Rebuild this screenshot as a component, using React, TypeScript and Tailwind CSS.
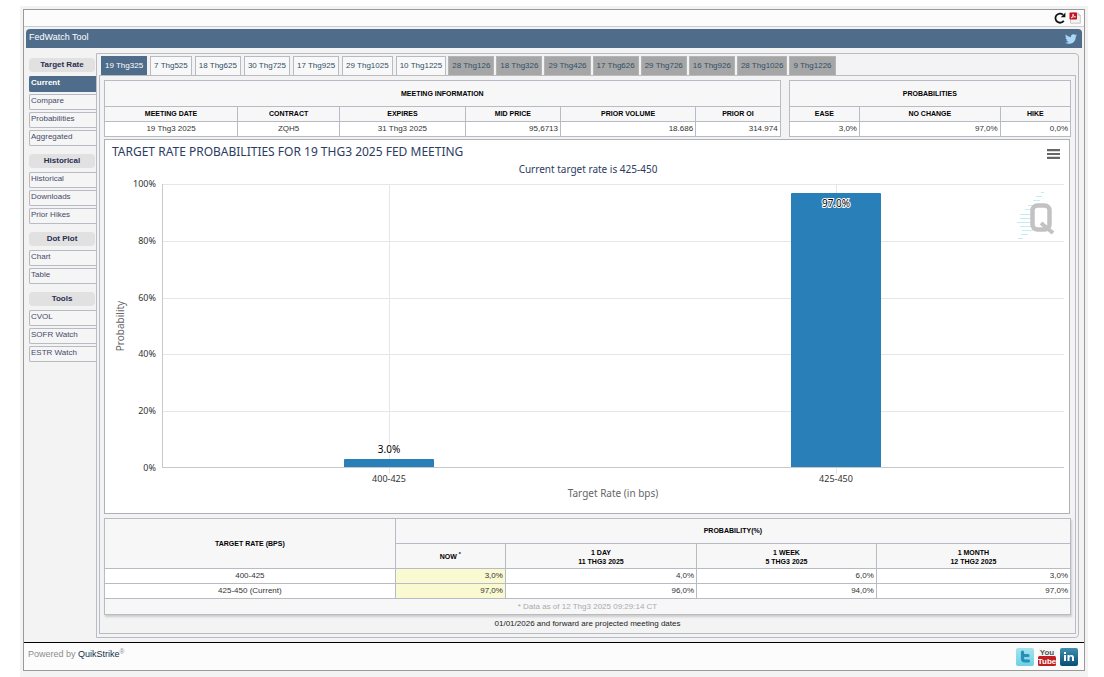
import { FaTwitter } from 'react-icons/fa';
import clsx from 'clsx';

const NAV = [
  { title: 'Target Rate', items: ['Current', 'Compare', 'Probabilities', 'Aggregated'] },
  { title: 'Historical', items: ['Historical', 'Downloads', 'Prior Hikes'] },
  { title: 'Dot Plot', items: ['Chart', 'Table'] },
  { title: 'Tools', items: ['CVOL', 'SOFR Watch', 'ESTR Watch'] },
];

const MEETINGS = ['19 Thg325', '7 Thg525', '18 Thg625', '30 Thg725', '17 Thg925', '29 Thg1025', '10 Thg1225'];
const PROJECTED = ['28 Thg126', '18 Thg326', '29 Thg426', '17 Thg626', '29 Thg726', '16 Thg926', '28 Thg1026', '9 Thg1226'];

const BARS = [
  { label: '400-425', value: 3, center: 284 },
  { label: '425-450', value: 97, center: 731 },
];

const PLOT = { left: 57, right: 959, top: 44, bottom: 328 };
const yFor = (value: number) => Math.round(PLOT.bottom - ((PLOT.bottom - PLOT.top) * value) / 100);

const th = 'border border-[#b9bbc4] bg-[#f7f7f8] px-0 pt-px pb-0 text-center text-[7px] font-bold text-black uppercase';
const td = 'border border-[#b9bbc4] bg-white px-[2px] py-0 text-[8px] text-[#333]';

function Toolbar() {
  return (
    <div className="flex h-[17px] items-center justify-end gap-[3px] border-b border-[#ccc] bg-[#fcfcfc] pr-[3px]">
      <button type="button" aria-label="Reload">
        <svg className="h-3 w-3" viewBox="0 0 12 12">
          <path d="M9.8 8.8A4.6 4.6 0 1 1 9 2.6" fill="none" stroke="#111" strokeWidth="1.8" />
          <path d="M11.4 0.6V5.2H6.8Z" fill="#111" />
        </svg>
      </button>
      <button type="button" aria-label="Export to PDF">
        <svg className="h-3 w-3" viewBox="0 0 12 12">
          <path d="M3.5 1H9L11.3 3.3V11.2H1.5V3Z" fill="#f4f4f4" stroke="#bbb" strokeWidth="0.8" />
          <path d="M9 1V3.3H11.3" fill="#ddd" stroke="#bbb" strokeWidth="0.6" />
          <rect x="0.5" y="0.5" width="7.5" height="7" rx="0.8" fill="#c8101c" />
          <path d="M2.2 6C3.6 4.8 4.2 3 4 2C4 3.6 5.2 4.8 6.6 4.9C5 4.6 3.4 5 2.2 6Z" fill="none" stroke="#fff" strokeWidth="0.8" />
        </svg>
      </button>
    </div>
  );
}

function Sidebar() {
  return (
    <nav className="flex w-[67px] shrink-0 flex-col gap-2 pt-[5px]">
      {NAV.map((group) => (
        <div key={group.title}>
          <h3 className="mr-px mb-1 h-[14px] rounded-sm bg-[#e1e1e1] text-center text-[8px] leading-[13px] font-bold text-[#2a2e50]">
            {group.title}
          </h3>
          <ul className="flex flex-col gap-[2px]">
            {group.items.map((item) => (
              <li key={item}>
                <a
                  href="#"
                  className={clsx(
                    'block h-4 rounded-l-xs border border-r-0 pl-px text-[8px] leading-3',
                    item === 'Current'
                      ? 'border-[#4f6c8a] bg-[#4f6c8a] font-bold text-white'
                      : 'border-[#b9bbc4] bg-[#f5f5f5] text-[#464a68]'
                  )}
                >
                  {item}
                </a>
              </li>
            ))}
          </ul>
        </div>
      ))}
    </nav>
  );
}

function Tabs() {
  return (
    <div className="flex gap-[2px] pl-[2px] text-[8px]">
      <div className="flex gap-[3px]">
        {MEETINGS.map((name, i) => (
          <button
            key={name}
            type="button"
            className={clsx(
              'h-[19px] border border-b-0 px-[3px] whitespace-nowrap',
              i === 0 ? 'border-[#4f6c8a] bg-[#4f6c8a] text-white' : 'border-[#b9bbc4] bg-[#f8f8f8] text-[#2f5068]'
            )}
          >
            {name}
          </button>
        ))}
      </div>
      <div className="flex gap-[2px]">
        {PROJECTED.map((name) => (
          <button
            key={name}
            type="button"
            className="h-[19px] border border-b-0 border-[#b4b4b4] bg-[#a6a6a6] px-[3px] whitespace-nowrap text-[#2f5068]"
          >
            {name}
          </button>
        ))}
      </div>
    </div>
  );
}

function MeetingTables() {
  return (
    <div className="flex gap-2">
      <table className="w-[69%] grow table-fixed border-collapse">
        <colgroup>
          <col className="w-[19.7%]" />
          <col className="w-[15.1%]" />
          <col className="w-[18.6%]" />
          <col className="w-[14.1%]" />
          <col className="w-[20%]" />
          <col className="w-[12.5%]" />
        </colgroup>
        <thead>
          <tr className="h-[26px]">
            <th className={th} colSpan={6}>Meeting Information</th>
          </tr>
          <tr className="h-[15px]">
            <th className={th}>Meeting Date</th>
            <th className={th}>Contract</th>
            <th className={th}>Expires</th>
            <th className={th}>Mid Price</th>
            <th className={th}>Prior Volume</th>
            <th className={th}>Prior OI</th>
          </tr>
        </thead>
        <tbody>
          <tr className="h-[15px] leading-3">
            <td className={clsx(td, 'text-center')}>19 Thg3 2025</td>
            <td className={clsx(td, 'text-center')}>ZQH5</td>
            <td className={clsx(td, 'text-center')}>31 Thg3 2025</td>
            <td className={clsx(td, 'text-right')}>95,6713</td>
            <td className={clsx(td, 'text-right')}>18.686</td>
            <td className={clsx(td, 'text-right')}>314.974</td>
          </tr>
        </tbody>
      </table>
      <table className="w-[29.2%] table-fixed border-collapse">
        <colgroup>
          <col className="w-[25%]" />
          <col className="w-[50%]" />
          <col className="w-[25%]" />
        </colgroup>
        <thead>
          <tr className="h-[26px]">
            <th className={th} colSpan={3}>Probabilities</th>
          </tr>
          <tr className="h-[15px]">
            <th className={th}>Ease</th>
            <th className={th}>No Change</th>
            <th className={th}>Hike</th>
          </tr>
        </thead>
        <tbody>
          <tr className="h-[15px] leading-3">
            <td className={clsx(td, 'text-right')}>3,0%</td>
            <td className={clsx(td, 'text-right')}>97,0%</td>
            <td className={clsx(td, 'text-right')}>0,0%</td>
          </tr>
        </tbody>
      </table>
    </div>
  );
}

function Chart() {
  return (
    <div className="relative mt-[2px] mr-px border border-[#b0b1b8] bg-white">
      <svg className="block h-auto w-full font-['Noto_Sans',sans-serif]" viewBox="0 0 964 373">
        <text x="7" y="16" fontSize="12" fill="#2c3c62">
          TARGET RATE PROBABILITIES FOR 19 THG3 2025 FED MEETING
        </text>
        <text x="483" y="33" fontSize="10" textAnchor="middle" fill="#2c3c62">
          Current target rate is 425-450
        </text>

        {/* grid and axes */}
        <g shapeRendering="crispEdges">
          {[20, 40, 60, 80, 100].map((tick) => (
            <line key={tick} x1={PLOT.left} x2={PLOT.right} y1={yFor(tick) + 0.5} y2={yFor(tick) + 0.5} stroke="#e6e6e6" />
          ))}
          {BARS.map((bar) => (
            <line key={bar.label} x1={bar.center + 0.5} x2={bar.center + 0.5} y1={PLOT.top} y2={PLOT.bottom + 6} stroke="#e6e6e6" />
          ))}
          <line x1={PLOT.left + 0.5} x2={PLOT.left + 0.5} y1={PLOT.top} y2={PLOT.bottom} stroke="#c8c8cc" />
        </g>
        {[0, 20, 40, 60, 80, 100].map((tick) => (
          <text key={tick} x="51" y={yFor(tick) + 3} fontSize="9" textAnchor="end" fill="#333">
            {tick}%
          </text>
        ))}

        {/* Q watermark */}
        <path
          d="M936 52.5h3M931 56.5h6M928 60.5h7M923 65.5h9M920 69.5h8M915 74.5h12M915 78.5h12M912 82.5h15M915 86.5h12M917 90.5h11M916 94.5h7M913 98.5h5"
          stroke="#c4ecf2"
        />
        <rect x="927.5" y="65.5" width="17" height="24" rx="5" fill="none" stroke="#c2c2c2" strokeWidth="4.5" />
        <path d="M936 83L948 93" fill="none" stroke="#c2c2c2" strokeWidth="4" />

        {BARS.map((bar) => (
          <g key={bar.label}>
            <rect x={bar.center - 45} y={yFor(bar.value)} width="90" height={PLOT.bottom - yFor(bar.value)} rx="1" fill="#2980b9" />
            <text x={bar.center} y={342} fontSize="9" textAnchor="middle" fill="#333">
              {bar.label}
            </text>
            <text
              x={bar.center}
              y={bar.value > 90 ? yFor(bar.value) + 14 : yFor(bar.value) - 6}
              fontSize="10"
              textAnchor="middle"
              fill="#000"
              stroke="#fff"
              strokeWidth="2"
              paintOrder="stroke"
            >
              {bar.value.toFixed(1)}%
            </text>
          </g>
        ))}
        <line x1={PLOT.left} x2={PLOT.right} y1={PLOT.bottom - 0.5} y2={PLOT.bottom - 0.5} stroke="#c8c8cc" />
        <text x="508" y="357" fontSize="10" textAnchor="middle" fill="#666">
          Target Rate (in bps)
        </text>
        <text transform="translate(19 186) rotate(-90)" fontSize="10" textAnchor="middle" fill="#666">
          Probability
        </text>
      </svg>
      <button type="button" aria-label="Chart menu" className="absolute top-2 right-[9px]">
        <svg className="block h-[12px] w-[13px]" viewBox="0 0 13 12">
          <path d="M0 2.2H13M0 6H13M0 9.8H13" stroke="#666" strokeWidth="2.2" />
        </svg>
      </button>
    </div>
  );
}

function ProbabilityTable() {
  const rows = [
    ['400-425', '3,0%', '4,0%', '6,0%', '3,0%'],
    ['425-450 (Current)', '97,0%', '96,0%', '94,0%', '97,0%'],
  ];
  return (
    <table className="mt-1 w-full table-fixed border-collapse shadow-[1px_2px_2px_#ccc]">
      <colgroup>
        <col className="w-[30.1%]" />
        <col className="w-[11.4%]" />
        <col className="w-[19.8%]" />
        <col className="w-[18.6%]" />
        <col className="w-[20.1%]" />
      </colgroup>
      <thead>
        <tr className="h-[25px]">
          <th className={th} rowSpan={2}>Target Rate (bps)</th>
          <th className={th} colSpan={4}>Probability(%)</th>
        </tr>
        <tr className="h-[25px] leading-[9px]">
          <th className={th}>Now <sup>*</sup></th>
          <th className={th}>1 Day<br />11 Thg3 2025</th>
          <th className={th}>1 Week<br />5 Thg3 2025</th>
          <th className={th}>1 Month<br />12 Thg2 2025</th>
        </tr>
      </thead>
      <tbody>
        {rows.map(([rate, now, day, week, month]) => (
          <tr key={rate} className="h-[15px] leading-3">
            <td className={clsx(td, 'text-center')}>{rate}</td>
            <td className="border border-[#b9bbc4] bg-[#f9f9d2] px-[2px] py-0 text-right text-[8px] text-[#333]">{now}</td>
            <td className={clsx(td, 'text-right')}>{day}</td>
            <td className={clsx(td, 'text-right')}>{week}</td>
            <td className={clsx(td, 'text-right')}>{month}</td>
          </tr>
        ))}
        <tr className="h-4 leading-3">
          <td colSpan={5} className="border border-[#b9bbc4] bg-[#f7f7f8] p-0 text-center text-[8px] text-[#aaa]">
            * Data as of 12 Thg3 2025 09:29:14 CT
          </td>
        </tr>
      </tbody>
    </table>
  );
}

function Footer() {
  return (
    <footer className="flex h-[28px] justify-between border-t border-black bg-[#fcfcfc] pr-[6px] pl-1">
      <p className="pt-1 text-[9px] leading-[14px] text-[#8c8c8c]">
        Powered by <a href="#" className="text-[#12304a]">QuikStrike</a><sup>®</sup>
      </p>
      <div className="flex items-center gap-1">
        <a href="#" aria-label="Twitter">
          <svg className="h-[18px] w-[18px]" viewBox="0 0 18 18">
            <defs>
              <linearGradient id="tw" x2="0" y2="1">
                <stop stopColor="#a5e4ef" />
                <stop offset="1" stopColor="#6fd0e2" />
              </linearGradient>
            </defs>
            <rect width="18" height="18" rx="2" fill="url(#tw)" />
            <path d="M6.5 4V10.5Q6.5 13 9 13H12.5M6.5 7.5H12" fill="none" stroke="#2690b8" strokeWidth="3.2" strokeLinecap="round" />
          </svg>
        </a>
        <a href="#" aria-label="YouTube">
          <svg className="h-[18px] w-[18px] font-['Liberation_Sans_Narrow','Liberation_Sans',sans-serif] font-bold" viewBox="0 0 18 18">
            <rect width="18" height="18" rx="1" fill="#f7f7f7" />
            <rect y="8" width="18" height="10" rx="1.5" fill="#c01f24" />
            <text x="9" y="7" fontSize="8" textAnchor="middle" fill="#555">You</text>
            <text x="9" y="16" fontSize="8" textAnchor="middle" fill="#fff">Tube</text>
          </svg>
        </a>
        <a href="#" aria-label="LinkedIn">
          <svg className="h-[18px] w-[18px]" viewBox="0 0 18 18">
            <defs>
              <linearGradient id="li" x2="0" y2="1">
                <stop stopColor="#3f8fb0" />
                <stop offset="1" stopColor="#094d75" />
              </linearGradient>
            </defs>
            <rect width="18" height="18" rx="2" fill="url(#li)" />
            <path d="M4 7h2v6H4ZM4 4h2v2H4ZM7.5 7h2v0.9C10.3 6.7 14 6.2 14 9.6V13H12V9.9C12 8.1 9.5 8.2 9.5 9.9V13h-2Z" fill="#fff" />
          </svg>
        </a>
      </div>
    </footer>
  );
}

export default function App() {
  return (
    <div className="mt-[6px] mr-4 ml-5 bg-[#f3f3f3] p-[3px] pb-[6px] font-['Liberation_Sans',Arial,sans-serif]">
      <div className="border border-[#999]">
        <Toolbar />
        <header className="mx-[2px] mt-[2px] flex h-[19px] items-center justify-between rounded-t-sm bg-[#4f6c8a] pr-[5px] pl-[3px]">
          <h1 className="pb-[3px] text-[9px] leading-3 text-white">FedWatch Tool</h1>
          <a href="#" aria-label="Share on Twitter">
            <FaTwitter className="h-3 w-3 text-[#a9d8f8]" />
          </a>
        </header>
        <div className="mt-[5px] mr-[5px] mb-1 ml-[5px] flex">
          <Sidebar />
          <main className="min-w-0 grow rounded-tr-sm rounded-br-sm border border-[#b9bbc4] p-[2px] pb-[3px]">
            <Tabs />
            <div className="border border-[#b9bbc4] p-1 pb-[3px]">
              <MeetingTables />
              <Chart />
              <ProbabilityTable />
              <p className="pt-[3px] text-center text-[8px] leading-3 text-[#222]">
                01/01/2026 and forward are projected meeting dates
              </p>
            </div>
          </main>
        </div>
        <Footer />
      </div>
    </div>
  );
}
